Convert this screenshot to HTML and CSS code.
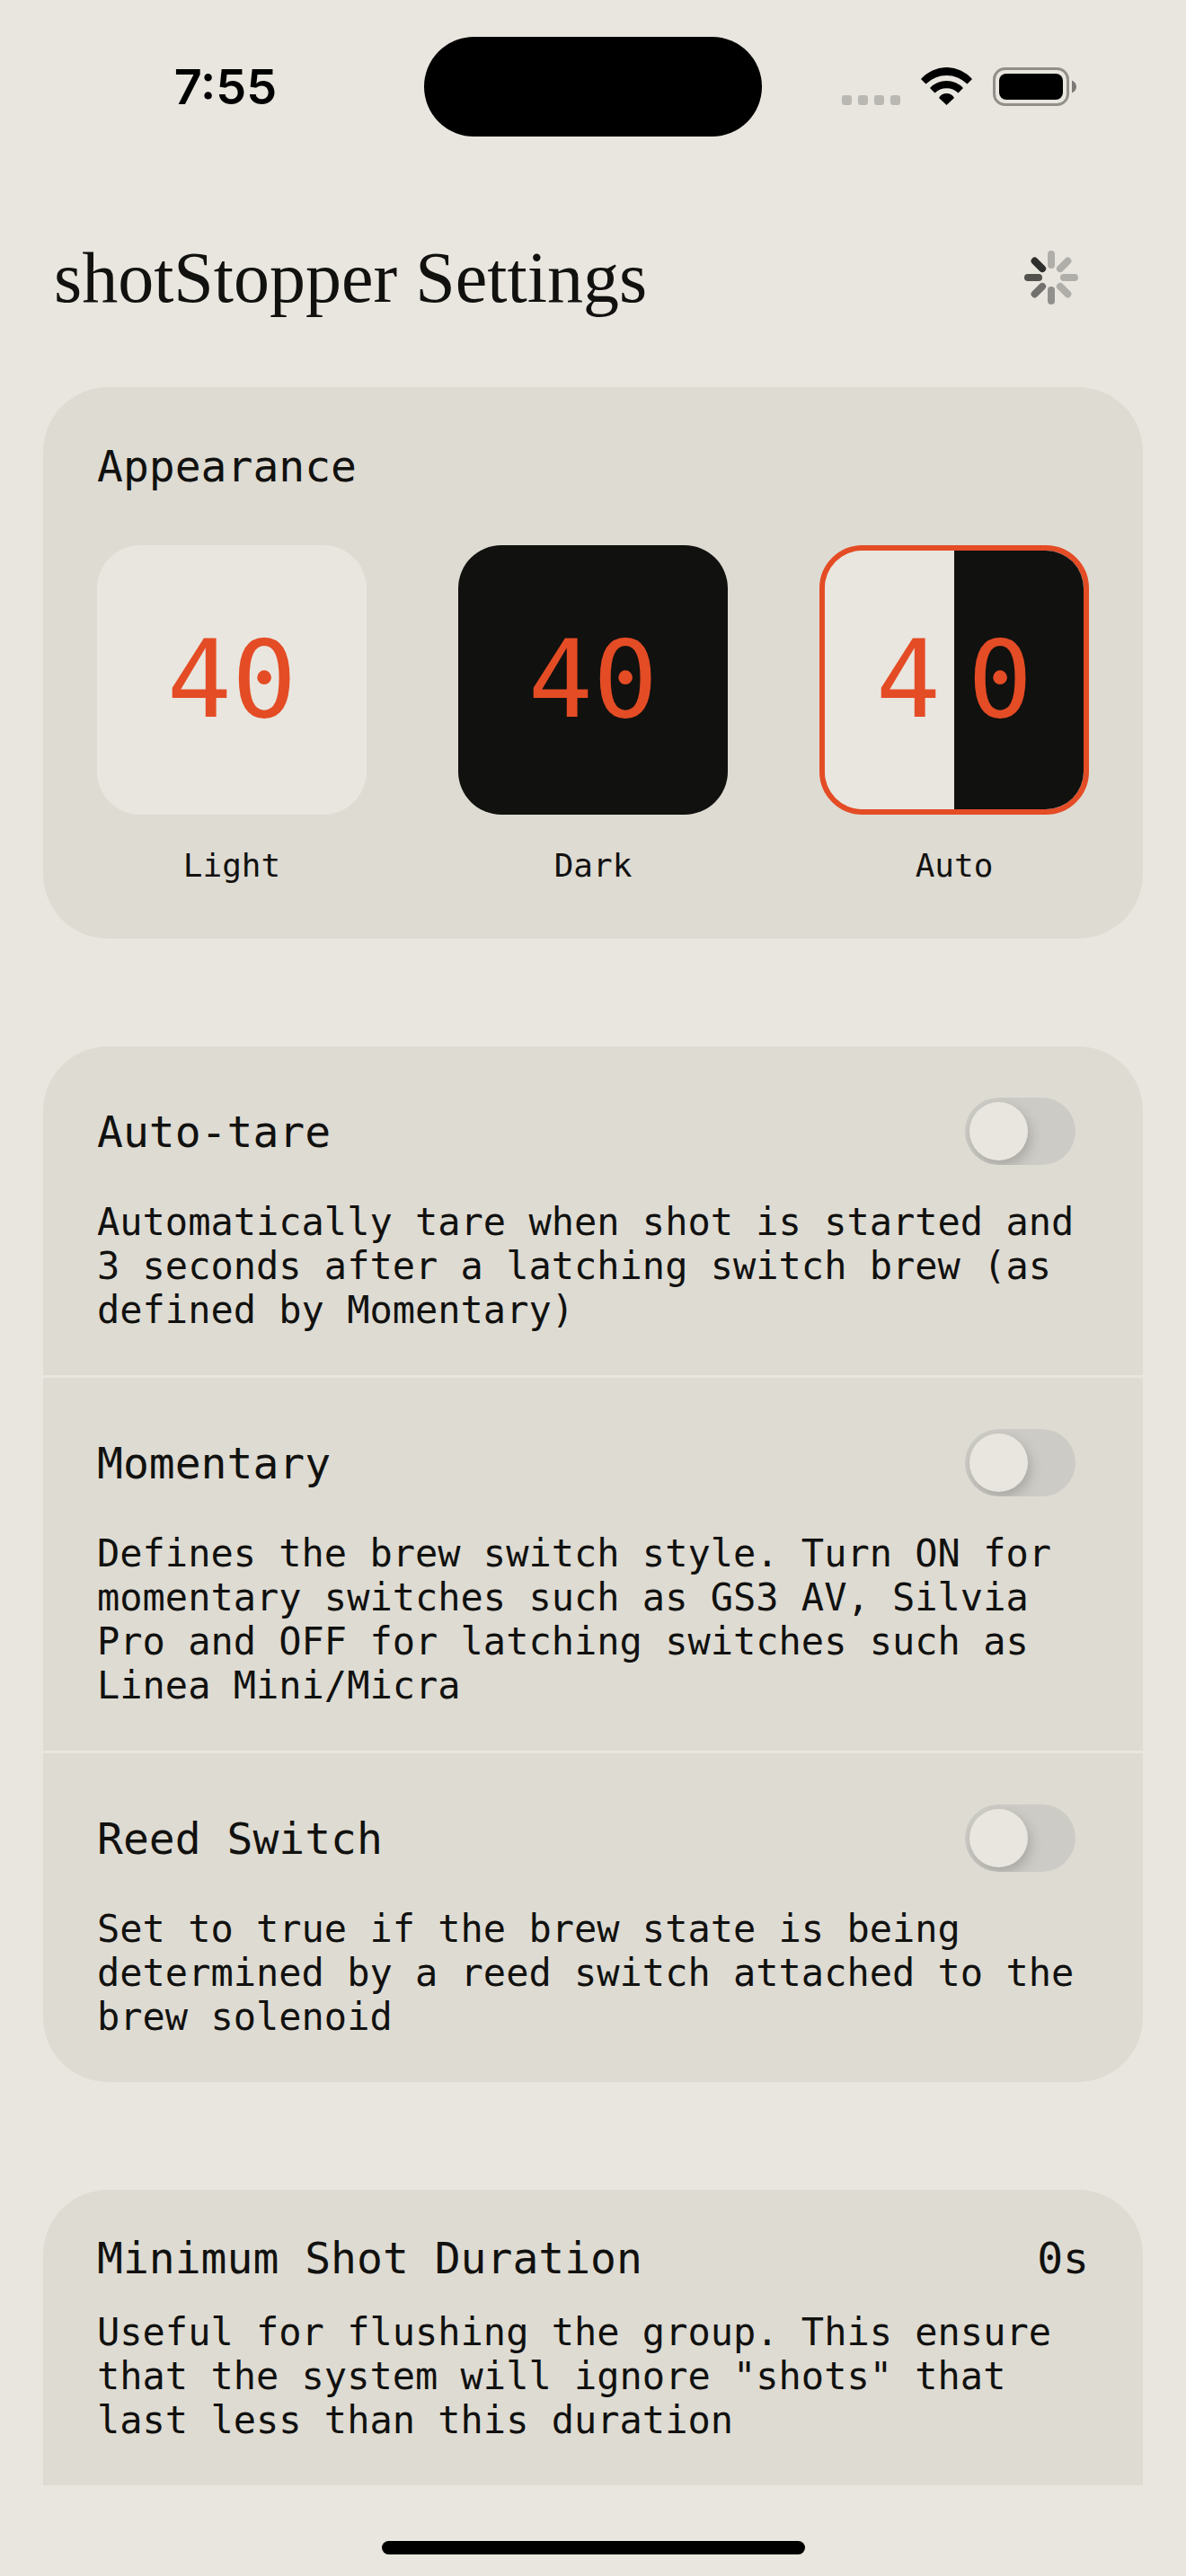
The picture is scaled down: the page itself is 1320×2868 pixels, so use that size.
FILE: index.html
```html
<!DOCTYPE html>
<html lang="en">
<head>
  <title>shotStopper Settings</title>
  <meta charset="UTF-8">
  <meta name="viewport" content="width=device-width, initial-scale=1">
  <link rel="stylesheet" href="styles.css">
</head>
<body>
  <div class="status-bar">
    <div class="time">7:55</div>
    <div class="island"></div>
    <div class="status-icons">
      <svg class="icon-signal" width="65" height="43" viewBox="0 0 65 43">
        <rect x="0" y="31" width="11" height="11" rx="3"/>
        <rect x="18" y="31" width="11" height="11" rx="3"/>
        <rect x="36" y="31" width="11" height="11" rx="3"/>
        <rect x="54" y="31" width="11" height="11" rx="3"/>
      </svg>
      <svg class="icon-wifi" width="57" height="43" viewBox="0 0 57 43">
        <path d="M0 13A37.7 37.7 0 0 1 57 13L51.5 18.5A32.6 32.6 0 0 0 5.5 18.5Z"/>
        <path d="M10 23A25.4 25.4 0 0 1 47 23L41.5 28.5A18.9 18.9 0 0 0 15.500 28.5Z"/>
        <path d="M20 34A9.7 9.7 0 0 1 37 34L28.500 42Z"/>
      </svg>
      <svg class="icon-battery" width="93" height="43" viewBox="0 0 93 43">
        <rect class="battery-shell" x="1.5" y="1.5" width="82" height="40" rx="12"/>
        <rect x="7" y="7" width="71" height="29" rx="8"/>
        <path class="battery-cap" d="M88 14.500C91 16 93 18 93 21.500S91 27 88 28.500Z"/>
      </svg>
    </div>
  </div>

  <header class="header">
    <h1 class="title">shotStopper Settings</h1>
    <svg class="spinner" width="60" height="60" viewBox="0 0 60 60" role="img" aria-label="Loading">
      <g stroke-width="8" stroke-linecap="round">
        <path stroke="#afaea9" d="M30 4V16M48.400 11.600L39.900 20.100M56 30H44M48.400 48.400L39.900 39.900"/>
        <path stroke="#91908c" d="M30 56V44"/>
        <path stroke="#72716e" d="M11.600 48.400L20.100 39.900"/>
        <path stroke="#53524f" d="M4 30H16"/>
        <path stroke="#2f2f2d" d="M11.600 11.600L20.100 20.100"/>
      </g>
    </svg>
  </header>

  <main class="settings">
    <section class="card appearance">
      <h2 class="label">Appearance</h2>
      <div class="themes">
        <label class="theme">
          <input type="radio" name="theme" value="light">
          <span class="swatch light">40</span>
          <span class="theme-name">Light</span>
        </label>
        <label class="theme">
          <input type="radio" name="theme" value="dark">
          <span class="swatch dark">40</span>
          <span class="theme-name">Dark</span>
        </label>
        <label class="theme">
          <input type="radio" name="theme" value="auto" checked>
          <span class="swatch auto"><span class="half light">4</span><span class="half dark">0</span></span>
          <span class="theme-name">Auto</span>
        </label>
      </div>
    </section>

    <section class="card">
      <div class="row">
        <div class="row-head">
          <label class="label" for="autoTare">Auto-tare</label>
          <input type="checkbox" class="switch" id="autoTare">
        </div>
        <p class="description">Automatically tare when shot is started and 3 seconds after a latching switch brew (as defined by Momentary)</p>
      </div>
      <div class="row">
        <div class="row-head">
          <label class="label" for="momentary">Momentary</label>
          <input type="checkbox" class="switch" id="momentary">
        </div>
        <p class="description">Defines the brew switch style. Turn ON for momentary switches such as GS3 AV, Silvia Pro and OFF for latching switches such as Linea Mini/Micra</p>
      </div>
      <div class="row">
        <div class="row-head">
          <label class="label" for="reedSwitch">Reed Switch</label>
          <input type="checkbox" class="switch" id="reedSwitch">
        </div>
        <p class="description">Set to true if the brew state is being determined by a reed switch attached to the brew solenoid</p>
      </div>
    </section>

    <section class="card card-cut">
      <div class="row">
        <div class="value-head">
          <h2 class="label">Minimum Shot Duration</h2>
          <span class="label">0s</span>
        </div>
        <p class="description">Useful for flushing the group. This ensure that the system will ignore "shots" that last less than this duration</p>
      </div>
    </section>
  </main>

  <footer class="home">
    <div class="home-indicator"></div>
  </footer>
</body>
</html>
```

FILE: styles.css
```css
:root {
  --bg: #e9e6df;
  --card: #dedbd3;
  --ink: #11110f;
  --accent: #e44c25;
}

* {
  box-sizing: border-box;
}

body {
  margin: 0;
  font-family: "DejaVu Sans Mono", Menlo, monospace;
  font-size: 42px;
  color: var(--ink);
  background: var(--bg);
}

/* status bar */

.status-bar {
  display: grid;
  grid-template-columns: 1fr 376px 1fr;
  align-items: center;
  padding: 41px 0 34px;
}

.time {
  padding-left: 30px;
  font-family: Inter, sans-serif;
  font-size: 54px;
  font-weight: 600;
  line-height: 60px;
  text-align: center;
  color: #000;
}

.island {
  height: 111px;
  border-radius: 56px;
  background: #000;
}

.status-icons {
  display: flex;
  justify-content: flex-end;
  gap: 23px;
  padding-right: 122px;
}

.icon-signal {
  fill: #bab8b3;
}

.battery-shell {
  fill: none;
  stroke: #918f8a;
  stroke-width: 3;
}

.battery-cap {
  fill: #7c7a76;
}

/* header */

.header {
  display: flex;
  align-items: center;
  justify-content: space-between;
  min-height: 245px;
  padding: 0 120px 0 60px;
}

.title {
  margin: 0;
  font-family: "Liberation Serif", serif;
  font-size: 80px;
  font-weight: 400;
  line-height: 96px;
}

.spinner {
  fill: none;
}

/* cards */

.settings {
  display: flex;
  flex-direction: column;
  gap: 120px;
  padding: 0 48px;
}

.card {
  border-radius: 72px;
  background: var(--card);
}

.card-cut {
  border-radius: 72px 72px 0 0;
}

.label {
  margin: 0;
  font-size: 48px;
  font-weight: 400;
  line-height: 56px;
}

.appearance {
  padding: 60px;
}

.themes {
  display: flex;
  justify-content: space-between;
  margin-top: 60px;
}

.theme {
  position: relative;
  display: flex;
  flex-direction: column;
  align-items: center;
  gap: 36px;
  cursor: pointer;
}

.theme input {
  position: absolute;
  opacity: 0;
}

.swatch {
  display: flex;
  align-items: center;
  justify-content: center;
  width: 300px;
  height: 300px;
  border-radius: 48px;
  font-size: 120px;
  line-height: 140px;
  color: var(--accent);
  overflow: hidden;
}

.theme input:checked + .swatch {
  border: 6px solid var(--accent);
}

.light {
  background: var(--bg);
}

.dark {
  background: var(--ink);
}

.half {
  display: flex;
  flex: 1;
  align-items: center;
  height: 100%;
  padding: 0 15px;
}

.half.light {
  justify-content: flex-end;
}

.theme-name {
  font-size: 36px;
  line-height: 42px;
}

.row {
  padding: 48px 60px;
}

.row + .row {
  border-top: 3px solid var(--bg);
}

.row-head,
.value-head {
  display: flex;
  align-items: center;
  justify-content: space-between;
  margin-bottom: 30px;
}

.row-head {
  min-height: 93px;
  padding-right: 15px;
}

.description {
  margin: 0;
  line-height: 49px;
}

.switch {
  appearance: none;
  display: flex;
  width: 123px;
  height: 75px;
  margin: 0;
  padding: 5px;
  border-radius: 38px;
  background: #cccbc5;
  overflow: hidden;
  cursor: pointer;
}

.switch::before {
  content: "";
  width: 65px;
  height: 65px;
  border-radius: 50%;
  background: var(--bg);
  box-shadow: 3px 6px 14px rgba(0, 0, 0, 0.18);
}

.switch:checked {
  justify-content: flex-end;
  background: var(--accent);
}

/* home indicator */

.home {
  display: flex;
  justify-content: center;
  padding: 62px 0 24px;
}

.home-indicator {
  width: 471px;
  height: 15px;
  border-radius: 8px;
  background: #000;
}
```
